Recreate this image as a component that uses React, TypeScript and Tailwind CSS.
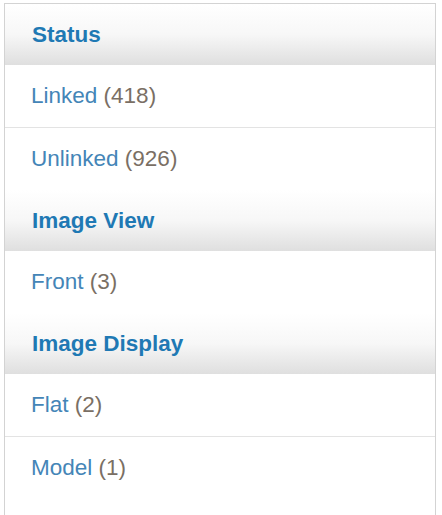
import React from "react";

type Item =
  | { kind: "header"; label: string }
  | { kind: "row"; label: string; count: number; divider?: boolean };

const items: Item[] = [
  { kind: "header", label: "Status" },
  { kind: "row", label: "Linked", count: 418, divider: true },
  { kind: "row", label: "Unlinked", count: 926 },
  { kind: "header", label: "Image View" },
  { kind: "row", label: "Front", count: 3 },
  { kind: "header", label: "Image Display" },
  { kind: "row", label: "Flat", count: 2, divider: true },
  { kind: "row", label: "Model", count: 1 },
];

export default function App() {
  return (
    <div
      className="w-[442px] h-[515px] bg-white overflow-hidden pt-[3px] pl-[4px]"
      style={{ fontFamily: '"Liberation Sans", Arial, sans-serif' }}
    >
      <div className="w-[432px] border-x border-t border-[#d3d3d3] h-[520px]">
        {items.map((it, i) =>
          it.kind === "header" ? (
            <div
              key={i}
              className="h-[61px] flex items-center pl-[27px] bg-gradient-to-b from-white via-[#f7f7f7] to-[#dfdfdf] text-[22.5px] font-bold text-[#1f79b4]"
            >
              {it.label}
            </div>
          ) : (
            <div
              key={i}
              className={`${it.divider ? "h-[63px] border-b border-[#e3e3e3]" : "h-[62px]"} flex items-center pl-[26px] text-[22.5px] text-[#4485b7]`}
            >
              <span>
                {it.label} <span className="text-[#7a6f64]">({it.count})</span>
              </span>
            </div>
          )
        )}
      </div>
    </div>
  );
}
